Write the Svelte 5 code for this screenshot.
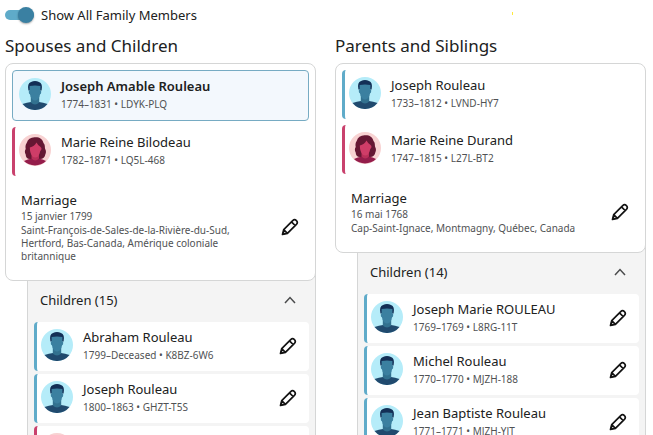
<script lang="ts">
  interface Person {
    name?: string;
    life?: string;
    sex: 'male' | 'female';
    selected?: boolean;
  }

  interface Family {
    title: string;
    couple: Person[];
    date: string;
    place: string;
    count: number;
    children: Person[];
  }

  const families: Family[] = [
    {
      title: 'Spouses and Children',
      couple: [
        { name: 'Joseph Amable Rouleau', life: '1774–1831 • LDYK-PLQ', sex: 'male', selected: true },
        { name: 'Marie Reine Bilodeau', life: '1782–1871 • LQ5L-468', sex: 'female' },
      ],
      date: '15 janvier 1799',
      place: 'Saint-François-de-Sales-de-la-Rivière-du-Sud, Hertford, Bas-Canada, Amérique coloniale britannique',
      count: 15,
      children: [
        { name: 'Abraham Rouleau', life: '1799–Deceased • K8BZ-6W6', sex: 'male' },
        { name: 'Joseph Rouleau', life: '1800–1863 • GHZT-T5S', sex: 'male' },
        { sex: 'female' },
      ],
    },
    {
      title: 'Parents and Siblings',
      couple: [
        { name: 'Joseph Rouleau', life: '1733–1812 • LVND-HY7', sex: 'male' },
        { name: 'Marie Reine Durand', life: '1747–1815 • L27L-BT2', sex: 'female' },
      ],
      date: '16 mai 1768',
      place: 'Cap-Saint-Ignace, Montmagny, Québec, Canada',
      count: 14,
      children: [
        { name: 'Joseph Marie ROULEAU', life: '1769–1769 • L8RG-11T', sex: 'male' },
        { name: 'Michel Rouleau', life: '1770–1770 • MJZH-188', sex: 'male' },
        { name: 'Jean Baptiste Rouleau', life: '1771–1771 • MJZH-YJT', sex: 'male' },
      ],
    },
  ];

  let showAll = $state(true);
  let open = $state([true, true]);
</script>

{#snippet avatar(sex: 'male' | 'female')}
  <svg class="avatar" viewBox="0 0 32 32" aria-hidden="true">
    {#if sex === 'male'}
      <circle cx="16" cy="16" r="16" fill="#b5ecf9" />
      <path d="M3.500 26Q8 24.300 12 24H20Q24 24.300 28.500 26A16 16 0 0 1 3.500 26Z" fill="#204a6e" />
      <path d="M11.800 18h8.400v6.500q-4.200 4-8.400 0Z" fill="#32718f" />
      <path d="M9.400 12.500Q8 5 12 4Q16 2 20 4Q24 5 22.600 12.500Z" fill="#132f56" />
      <path d="M10.600 8Q16 6.800 21.400 8V12.500q1.300 0 .7 2.500-.4 1.300-1 1.300-.4 3.200-2.400 5.200-2.700 2-5.400 0-2-2-2.400-5.200-.6 0-1-1.300Q9.300 12.500 10.600 12.500Z" fill="#3b80a0" />
    {:else}
      <circle cx="16" cy="16" r="16" fill="#f8d2d2" />
      <path d="M15.500 3.300C20 2.800 23.500 4.800 24.500 9c2 2 1 4 1.700 6 1.200 2 .8 4 .1 5.500-.3 2.500-2.300 4.500-5.300 4.500H11c-3 0-4.300-2-4.300-4.500-1.200-2-1-4 0-5.500-.5-2.500-.2-4.500 1-6 1-3.500 4-5.500 7.800-5.700Z" fill="#651733" />
      <path d="M5 27Q8.500 25 13 24.500h6.500q4.500.5 7.500 2.500A16 16 0 0 1 5 27Z" fill="#941d4b" />
      <path d="M12.500 19h7.500v5.500q-3.700 4-7.500 0Z" fill="#b92f59" />
      <path d="M10.800 13.500Q15.500 12.500 17.500 8.500 19 11.500 21.300 12.700q1.800 1.200 1 3l-1 1.300Q20.700 20.500 18.700 22.700q-2.500 1.500-4.900 0-2.800-2.700-3-9.200Z" fill="#cf3d68" />
    {/if}
  </svg>
{/snippet}

{#snippet editButton(label: string)}
  <button class="edit" type="button" aria-label={label}>
    <svg viewBox="0 0 18 18" aria-hidden="true">
      <path d="M1.500 16.500 2.700 11.600 11.700 2.600Q13.600.8 15.400 2.600 17.200 4.400 15.400 6.300L6.400 15.300ZM10.500 3.900 14.100 7.500M2.700 11.600 6.400 15.300" />
      <path class="tip" d="M1.200 16.800 2 13.300 4.700 16Z" />
    </svg>
  </button>
{/snippet}

{#snippet personRow(person: Person)}
  {@render avatar(person.sex)}
  <div class="info">
    {#if person.name}
      <div class="name">{person.name}</div>
      <div class="life">{person.life}</div>
    {/if}
  </div>
{/snippet}

<main>
  <header>
    <label class="switch">
      <input type="checkbox" role="switch" bind:checked={showAll} />
      Show All Family Members
    </label>
    <span class="marker"></span>
  </header>

  <div class="columns">
    {#each families as family, i}
      <section>
        <h2>{family.title}</h2>

        <div class="card">
          <div class="couple">
            {#each family.couple as person}
              <div class="person {person.sex}" class:selected={person.selected}>
                {@render personRow(person)}
              </div>
            {/each}
          </div>
          <div class="marriage">
            <div class="event">
              <h3>Marriage</h3>
              <p class="date">{family.date}</p>
              <p>{family.place}</p>
            </div>
            {@render editButton('Edit marriage')}
          </div>
        </div>

        <div class="children">
          <button class="toggle" type="button" aria-expanded={open[i]} onclick={() => (open[i] = !open[i])}>
            Children ({family.count})
            <svg class:closed={!open[i]} viewBox="0 0 12 8" aria-hidden="true">
              <path d="M1 7 6 1.500 11 7" />
            </svg>
          </button>
          {#if open[i]}
            <ul>
              {#each family.children as child}
                <li class="person {child.sex}">
                  {@render personRow(child)}
                  {@render editButton('Edit child')}
                </li>
              {/each}
            </ul>
          {/if}
        </div>
      </section>
    {/each}
  </div>
</main>

<style>
  :global(body) {
    margin: 0;
    background: #fff;
  }

  main {
    padding: 5px 7px 0 5px;
    font-family: 'Noto Sans', sans-serif;
    font-size: 13px;
    line-height: 20px;
    color: #202121;
  }

  header,
  .columns {
    display: grid;
    grid-template-columns: 1fr 1fr;
    column-gap: 19px;
    align-items: start;
  }

  h2,
  h3,
  p,
  ul {
    margin: 0;
    padding: 0;
    font-weight: 400;
  }

  h3 {
    font-size: 13px;
  }

  .switch {
    display: flex;
    align-items: center;
    gap: 7px;
  }

  .switch input {
    appearance: none;
    display: flex;
    align-items: center;
    width: 29px;
    height: 10px;
    margin: 0;
    border-radius: 5px;
    background: #b1b3b5;
  }

  .switch input::before {
    content: '';
    width: 16px;
    height: 16px;
    flex: none;
    border-radius: 50%;
    background: #777;
    box-shadow: 0 1px 2px rgba(0, 0, 0, 0.35);
  }

  .switch input:checked {
    justify-content: flex-end;
    background: #5fabc9;
  }

  .switch input:checked::before {
    background: #3a80a2;
  }

  .marker {
    width: 1px;
    height: 3px;
    margin: 7px 0 0 57%;
    background: #ffe93b;
  }

  h2 {
    padding: 9px 0 5px;
    font-size: 17px;
    line-height: 24px;
  }

  .card {
    position: relative;
    z-index: 1;
    border: 1px solid #d5d6d6;
    border-radius: 8px;
    background: #fff;
  }

  .couple {
    display: grid;
    gap: 6px;
    padding: 6px 6px 0;
  }

  .person {
    display: flex;
    align-items: center;
    box-sizing: border-box;
    min-height: 49px;
    padding: 0 12px 4px 4px;
    border-left: 3px solid #5fabc9;
    border-radius: 4px;
    background: #fff;
  }

  .person.female {
    border-left-color: #c9416d;
  }

  .person.selected {
    min-height: 51px;
    padding-left: 6px;
    border: 1px solid #76abc3;
    background: #f3f8fd;
  }

  .avatar {
    width: 32px;
    height: 32px;
    flex: none;
    margin-right: 10px;
  }

  .info {
    flex: 1;
    min-width: 0;
  }

  .name {
    line-height: 20px;
  }

  .selected .name {
    font-weight: 600;
  }

  .life,
  p {
    font-size: 10px;
    line-height: 13px;
    color: #505254;
  }

  .life {
    line-height: 16px;
  }

  .marriage {
    display: flex;
    align-items: center;
    gap: 28px;
    padding: 14px 16px 17px 15px;
  }

  .event {
    flex: 1;
  }

  .date {
    padding-bottom: 1px;
  }

  .edit {
    display: flex;
    flex: none;
    padding: 0;
    border: 0;
    background: none;
  }

  .edit svg {
    width: 18px;
    height: 18px;
    fill: none;
    stroke: #131313;
    stroke-width: 1.7;
    stroke-linejoin: round;
  }

  .edit .tip {
    fill: #131313;
    stroke: none;
  }

  .person .edit {
    padding-top: 2px;
  }

  .children {
    margin: -8px 0 0 22px;
    padding: 8px 6px 0;
    border: 1px solid #d5d6d6;
    border-top: 0;
    background: #f4f4f4;
  }

  .toggle {
    display: flex;
    align-items: center;
    justify-content: space-between;
    width: 100%;
    height: 41px;
    padding: 0 13px 3px 6px;
    border: 0;
    background: none;
    font: inherit;
    color: inherit;
  }

  .toggle svg {
    width: 12px;
    height: 8px;
    fill: none;
    stroke: #4a4b4c;
    stroke-width: 1.5;
  }

  .toggle .closed {
    transform: rotate(180deg);
  }

  ul {
    display: grid;
    gap: 3px;
    padding-bottom: 6px;
    list-style: none;
  }
</style>
